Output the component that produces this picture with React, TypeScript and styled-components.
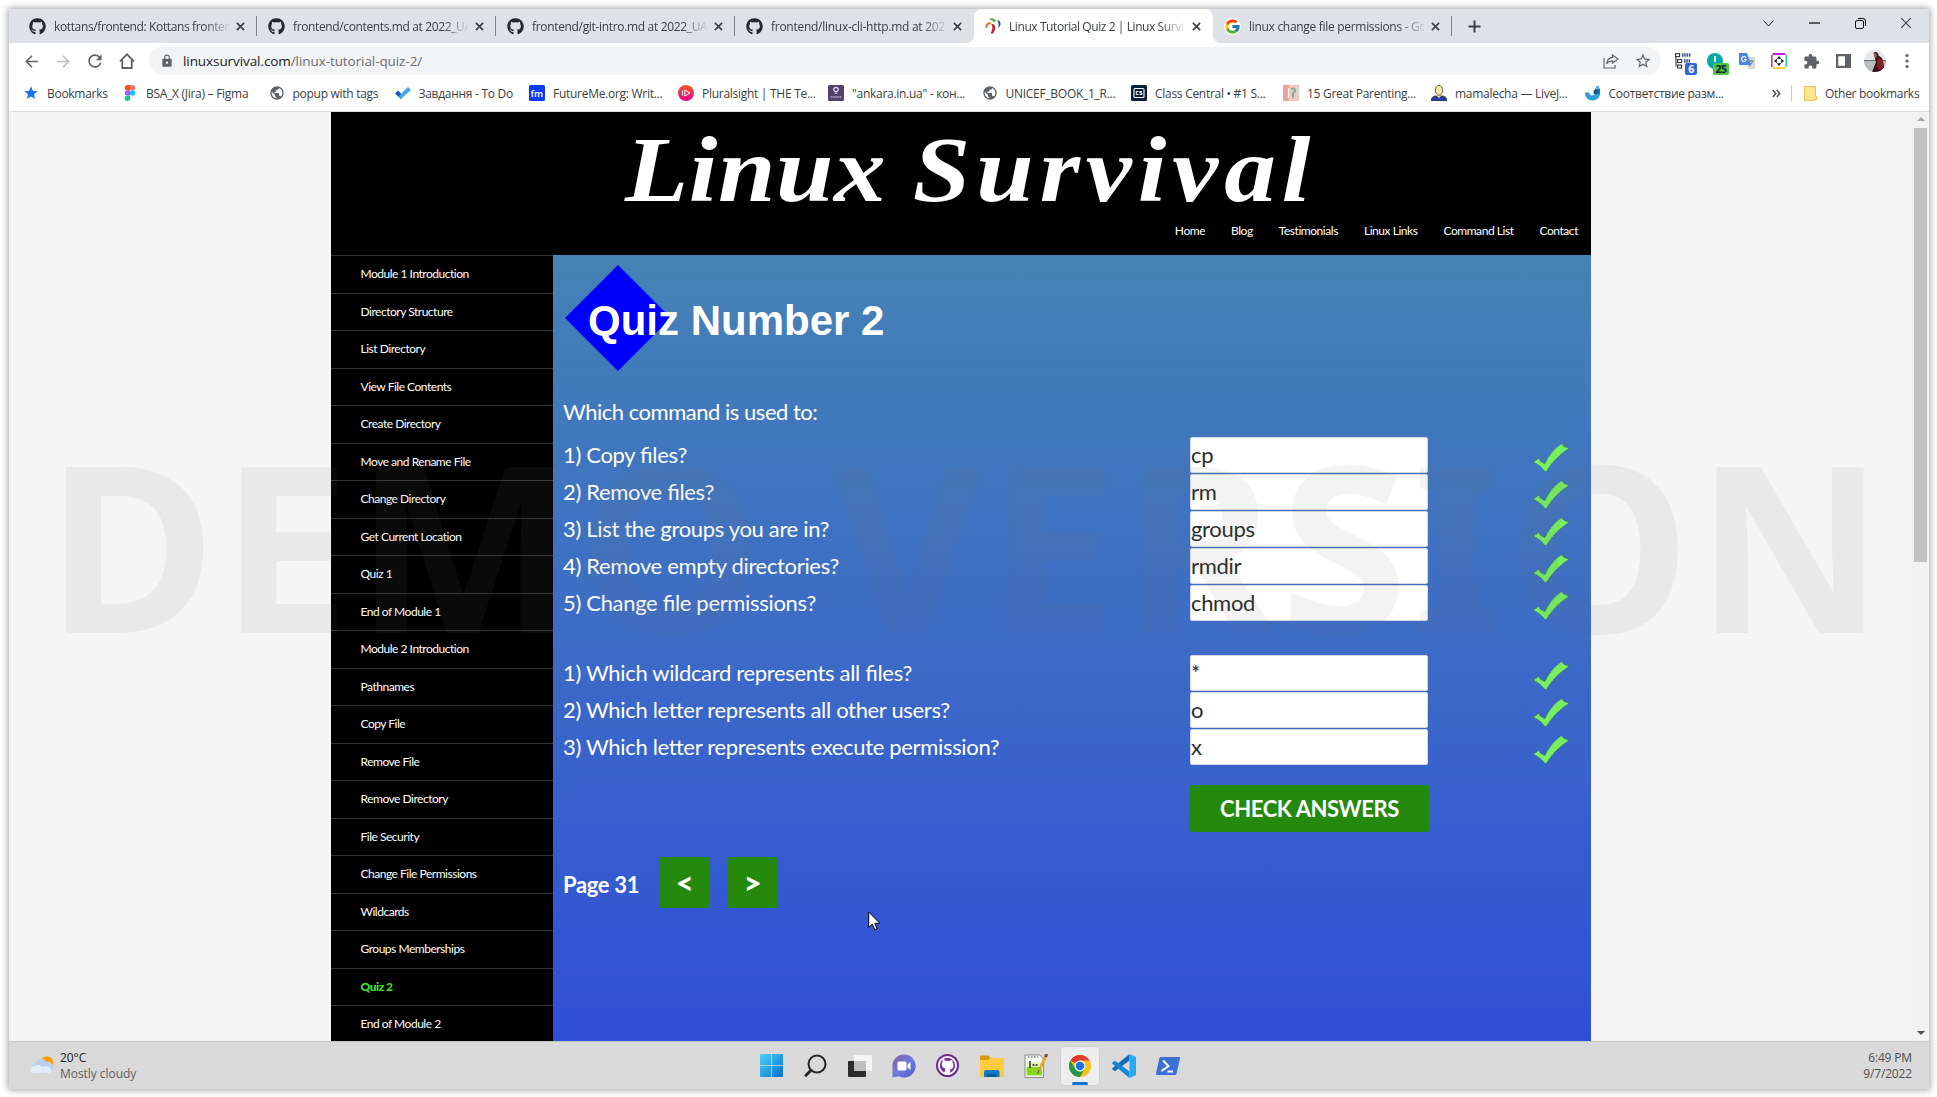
import React from "react";
import styled, { createGlobalStyle, css } from "styled-components";
import { FaGithub } from "react-icons/fa";
import { FcGoogle } from "react-icons/fc";
import { MdArrowBack, MdArrowForward, MdRefresh, MdLock, MdStar, MdStarBorder, MdExtension, MdPublic } from "react-icons/md";

const ui = `"Segoe UI", "Open Sans", "Noto Sans", sans-serif`;
const lato = `Lato, "Liberation Sans", sans-serif`;

const Global = createGlobalStyle`
  * { box-sizing: border-box; }
  html, body { margin: 0; padding: 0; background: #fff; overflow: hidden; }
  body { width: 1937px; height: 1097px; }
  svg { display: block; flex: none; }
  input, button { font: inherit; letter-spacing: inherit; }
`;

const Desktop = styled.div`
  width: 1937px;
  height: 1097px;
  padding: 9px 8px 8px 9px;
`;

const Screen = styled.div`
  position: relative;
  width: 1920px;
  height: 1080px;
  display: flex;
  flex-direction: column;
  box-shadow: 0 0 7px 1px rgba(0, 0, 0, 0.36);
  font-family: ${ui};
  background: #fff;
`;

/* ---------- browser chrome ---------- */

const TabStrip = styled.div`
  height: 34px;
  flex: none;
  display: flex;
  background: #dee1e6;
  padding-left: 9px;
`;

const Tab = styled.div<{ $active?: boolean; $line?: boolean }>`
  position: relative;
  width: 239px;
  height: 34px;
  display: flex;
  align-items: center;
  padding: 0 9px 0 10.5px;
  font-size: 12px;
  color: #3c4043;
  ${(p) =>
    p.$active &&
    css`
      background: #fff;
      border-radius: 8px 8px 0 0;
      &::before, &::after {
        content: "";
        position: absolute;
        bottom: 0;
        width: 8px;
        height: 8px;
      }
      &::before { left: -8px; background: radial-gradient(circle at 0 0, transparent 8px, #fff 8.5px); }
      &::after { right: -8px; background: radial-gradient(circle at 100% 0, transparent 8px, #fff 8.5px); }
    `}
  ${(p) =>
    p.$line &&
    css`
      &::after {
        content: "";
        position: absolute;
        right: 0;
        top: 7px;
        width: 1px;
        height: 20px;
        background: #808388;
      }
    `}
`;

const TabTitle = styled.span<{ $ls: number }>`
  width: 175px;
  margin-left: 8.5px;
  white-space: nowrap;
  overflow: hidden;
  letter-spacing: ${(p) => p.$ls}px;
  mask-image: linear-gradient(90deg, #000 150px, transparent 178px);
`;

const TabClose = styled.span`
  margin-left: auto;
  width: 16px;
  display: flex;
  justify-content: center;
`;

const NewTab = styled.div`
  width: 44px;
  display: flex;
  align-items: center;
  justify-content: center;
`;

const Caption = styled.div`
  margin-left: auto;
  display: flex;
  height: 28px;
  align-items: center;
`;

const CaptionButton = styled.div`
  width: 46px;
  display: flex;
  justify-content: center;
`;

const Toolbar = styled.div`
  height: 36px;
  flex: none;
  display: flex;
  align-items: center;
  padding-left: 6px;
  padding-right: 6px;
  background: #fff;
`;

const ToolButton = styled.div<{ $dim?: boolean }>`
  width: 32px;
  display: flex;
  justify-content: center;
  color: ${(p) => (p.$dim ? "#babcbe" : "#5f6368")};
`;

const Omnibox = styled.div`
  width: 1512px;
  height: 28px;
  margin-left: 6px;
  border-radius: 14px;
  background: #f1f3f4;
  display: flex;
  align-items: center;
  padding: 0 2px 0 11px;
  color: #5f6368;
`;

const Url = styled.div`
  margin-left: 9px;
  font-size: 13.5px;
  letter-spacing: -0.08px;
  color: #6b6f74;
  flex: 1;
  b { font-weight: 400; color: #202124; }
`;

const Extensions = styled.div`
  margin-left: auto;
  display: flex;
  align-items: center;
`;

const Ext = styled.div`
  position: relative;
  width: 32px;
  height: 26px;
  display: flex;
  align-items: center;
  justify-content: center;
  color: #5f6368;
`;

const Badge = styled.span<{ $bg: string; $w: number; $fg: string }>`
  position: absolute;
  right: 2px;
  bottom: -1px;
  width: ${(p) => p.$w}px;
  height: 12px;
  border-radius: 2px;
  background: ${(p) => p.$bg};
  color: ${(p) => p.$fg};
  font-size: 10.5px;
  font-weight: 700;
  letter-spacing: -0.4px;
  line-height: 12px;
  text-align: center;
`;

const Bookmarks = styled.div`
  height: 33px;
  flex: none;
  display: flex;
  align-items: center;
  padding: 0 10px 5px 14px;
  background: #fff;
  border-bottom: 1px solid #dadce0;
`;

const Bookmark = styled.div<{ $w: number }>`
  width: ${(p) => p.$w}px;
  height: 20px;
  margin-top: 1px;
  display: flex;
  align-items: center;
  gap: 8px;
  font-size: 12px;
  letter-spacing: -0.28px;
  color: #3c4043;
  white-space: nowrap;
`;

const More = styled(Bookmark)`
  margin-left: auto;
`;

const Divider = styled.div`
  width: 1px;
  height: 16px;
  margin: 1px 12px 0 10px;
  background: #c8cacd;
`;

/* ---------- web page ---------- */

const Viewport = styled.div`
  height: 929px;
  flex: none;
  display: flex;
  background: #f5f5f5;
  overflow: hidden;
`;

const Site = styled.div`
  width: 1260px;
  margin-left: 322px;
  display: flex;
  flex-direction: column;
  font-family: ${lato};
`;

const Masthead = styled.header`
  height: 143px;
  flex: none;
  background: #000;
  color: #fff;
  display: flex;
  flex-direction: column;
`;

const SiteTitle = styled.h1`
  margin: 0 0 0 294px;
  width: 800px;
  height: 104px;
  font: italic 700 94px/115px "Lucida Calligraphy", "Apple Chancery", "Liberation Serif", serif;
  white-space: nowrap;
  transform: scaleX(1.1);
  transform-origin: 0 0;
`;

const TitleWord = styled.span<{ $ls: number }>`
  letter-spacing: ${(p) => p.$ls}px;
`;

const TopNav = styled.nav`
  display: flex;
  justify-content: flex-end;
  gap: 26px;
  padding-right: 13px;
  height: 30px;
  font-size: 12px;
  line-height: 30px;
  letter-spacing: -0.45px;
`;

const Columns = styled.div`
  flex: 1;
  min-height: 0;
  display: flex;
`;

const Sidebar = styled.nav`
  width: 222px;
  background: #000;
  overflow: hidden;
`;

const SideItem = styled.div<{ $current?: boolean }>`
  height: 37.5px;
  border-top: 1px solid #333;
  padding: 8px 29.5px 9px;
  font-size: 12px;
  line-height: 20px;
  letter-spacing: -0.48px;
  color: ${(p) => (p.$current ? "#41e02d" : "#fff")};
  font-weight: ${(p) => (p.$current ? 900 : 400)};
`;

const Main = styled.main`
  width: 1038px;
  padding: 10px 0 0 10px;
  background: linear-gradient(#4682b4 0%, #427abb 16%, #3d6cc5 48%, #2f4fd8 100%);
  color: #fff;
  font-size: 22px;
  letter-spacing: -0.33px;
  font-feature-settings: "liga" 1;
`;

const Banner = styled.div`
  position: relative;
  height: 106px;
  margin-left: 1px;
`;

const BannerText = styled.h2`
  position: absolute;
  left: 24px;
  top: 32px;
  margin: 0;
  font: 700 42px/48px "Liberation Sans", Arial, sans-serif;
  letter-spacing: 0;
  white-space: nowrap;
`;

const Prompt = styled.p`
  margin: 26px 0 10px;
  height: 30px;
  line-height: 30px;
  letter-spacing: -0.48px;
`;

const Group = styled.div`
  margin-bottom: 33px;
`;

const Question = styled.label`
  height: 37px;
  display: grid;
  grid-template-columns: 627px 343px 36px;
  align-items: center;
  span { padding-bottom: 2px; }
  svg { margin-top: 4px; }
`;

const Answer = styled.input`
  width: 238px;
  height: 36px;
  margin: 0 0 1px;
  padding: 0 0 2px;
  border: 1px solid #d5d8e0;
  border-radius: 2px;
  background: #fff;
  color: #2b2b2b;
  outline: none;
`;

const CheckButton = styled.button`
  display: block;
  width: 239px;
  height: 47px;
  margin: -14px 0 25px 627px;
  padding: 0;
  border: 0;
  border-radius: 2px;
  background: #24890d;
  color: #fff;
  font-weight: 700;
  font-size: 22px;
  letter-spacing: -0.42px;
`;

const Pager = styled.div`
  display: flex;
  align-items: center;
  font-weight: 700;
`;

const PagerLabel = styled.span`
  width: 96px;
  padding-top: 3px;
`;

const PagerButton = styled.button`
  width: 51px;
  height: 51px;
  margin-right: 17px;
  padding: 0 0 2px;
  border: 0;
  border-radius: 2px;
  background: #24890d;
  color: #fff;
  font-weight: 900;
  font-size: 31px;
`;

const Scrollbar = styled.div`
  width: 17px;
  margin-left: auto;
  background: #f1f1f1;
  display: flex;
  flex-direction: column;
  align-items: center;
  padding: 5px 0 6px;
`;

const Thumb = styled.div`
  width: 13px;
  height: 434px;
  margin-top: 7px;
  margin-bottom: auto;
  background: #c1c1c1;
`;

const Arrow = styled.i<{ $down?: boolean }>`
  border: 4px solid transparent;
  ${(p) => (p.$down ? "border-top-color: #505050; border-bottom: 0;" : "border-bottom-color: #a3a3a3; border-top: 0;")}
`;

/* ---------- taskbar ---------- */

const Taskbar = styled.footer`
  height: 48px;
  flex: none;
  display: grid;
  grid-template-columns: 1fr auto 1fr;
  align-items: center;
  background: #d9d9d9;
  border-top: 1px solid #c4c4c4;
  font-size: 12px;
  line-height: 16px;
`;

const Weather = styled.div`
  display: flex;
  align-items: center;
  gap: 6px;
  padding-left: 21px;
  padding-top: 1px;
  letter-spacing: -0.05px;
  color: #1c1c1c;
  svg { margin-bottom: 3px; }
  small { display: block; font-size: 12px; color: #606060; }
`;

const Apps = styled.div`
  display: flex;
  align-items: center;
  margin-left: 2px;
`;

const TaskButton = styled.div<{ $active?: boolean }>`
  position: relative;
  width: 38px;
  height: 38px;
  margin: 0 3.05px;
  border-radius: 4px;
  display: flex;
  align-items: center;
  justify-content: center;
  ${(p) =>
    p.$active &&
    css`
      background: #ededed;
      box-shadow: 0 0 0 1px #cfcfcf;
      &::after {
        content: "";
        position: absolute;
        bottom: 0;
        left: 11px;
        width: 16px;
        height: 3px;
        border-radius: 2px;
        background: #0a78d4;
      }
    `}
`;

const Clock = styled.div`
  text-align: right;
  padding-right: 17px;
  color: #505050;
  letter-spacing: -0.15px;
`;

/* ---------- overlays ---------- */

const Watermark = styled.div`
  position: absolute;
  left: 37px;
  top: 376px;
  font: 700 232px/316px "Noto Sans", "Open Sans", sans-serif;
  letter-spacing: 4.8px;
  white-space: nowrap;
  color: rgba(118, 118, 118, 0.086);
  pointer-events: none;
`;

const Cursor = styled.svg`
  position: absolute;
  left: 859px;
  top: 902px;
`;

/* ---------- drawings ---------- */

const Close = ({ s = 9, w = 1.8 }: { s?: number; w?: number }) => (
  <svg width={s} height={s} viewBox="0 0 10 10" stroke="#3c4043" strokeWidth={w}>
    <path d="M1 1 9 9M9 1 1 9" />
  </svg>
);

const SurvivalIcon = () => (
  <svg width="16" height="16" viewBox="0 0 16 16">
    <path d="M.5 10C-.3 5.500 3 3.500 6.500 4.500L5.500 6.300C3.500 6 2.300 7.500 2.500 10Z" fill="#e8762c" />
    <path d="M4 1.800C6-.5 9.500 0 11 2.800L9 4.500C8 3 6.500 2 4 1.800Z" fill="#6aa84f" />
    <path d="M12 2C16 3 17 7 13 10C14 7 14 5 12 2Z" fill="#1f3f8f" />
    <path d="M6 6C11 5 11.500 11 8 15.500L5.500 15.500C8 11 8 8 6 6Z" fill="#c81e2b" />
  </svg>
);

const FigmaIcon = () => (
  <svg width="16" height="16" viewBox="0 0 16 16">
    <path d="M5.500 0H8v5.300H5.500a2.650 2.650 0 0 1 0-5.300Z" fill="#f24e1e" />
    <path d="M8 0h2.500a2.650 2.650 0 0 1 0 5.300H8Z" fill="#ff7262" />
    <path d="M5.500 5.300H8v5.300H5.500a2.650 2.650 0 0 1 0-5.300Z" fill="#a259ff" />
    <circle cx="10.600" cy="8" r="2.650" fill="#1abcfe" />
    <path d="M5.500 10.600H8v2.700a2.650 2.650 0 1 1-2.500-2.700Z" fill="#0acf83" />
  </svg>
);

const TodoIcon = () => (
  <svg width="16" height="16" viewBox="0 0 16 16">
    <path d="M0 8.500 3 5.500 8.500 11 5.800 14Z" fill="#185abd" />
    <path d="M5.800 14 3.500 11.500 13 2 16 5Z" fill="#41a5ee" />
  </svg>
);

const TileIcon = ({ bg, children }: { bg: string; children?: React.ReactNode }) => (
  <svg width="16" height="16" viewBox="0 0 16 16">
    <rect width="16" height="16" rx="1.500" fill={bg} />
    {children}
  </svg>
);

const FmIcon = () => (
  <TileIcon bg="#0a3cff">
    <text x="7.800" y="11.500" textAnchor="middle" fontSize="9.500" fontWeight="600" letterSpacing="0" fontFamily="Open Sans" fill="#fff">fm</text>
  </TileIcon>
);

const PluralIcon = () => (
  <svg width="16" height="16" viewBox="0 0 16 16">
    <defs>
      <linearGradient id="ps" x1="0" y1="0" x2="0" y2="1">
        <stop offset="0" stopColor="#f15b2a" />
        <stop offset="1" stopColor="#ec008c" />
      </linearGradient>
    </defs>
    <circle cx="8" cy="8" r="8" fill="url(#ps)" />
    <path d="M6.800 5 12 8 6.800 11ZM4.500 5.500v5" fill="none" stroke="#fff" strokeWidth="1" />
  </svg>
);

const AnkaraIcon = () => (
  <TileIcon bg="#51426b">
    <circle cx="8" cy="4.500" r="2.200" fill="none" stroke="#e8e2f0" strokeWidth="1.200" />
    <path d="M6.800 8.300h2.400" stroke="#d8d0e4" strokeWidth="1.200" />
    <path d="M2.500 12h11" stroke="#b9aecb" strokeWidth="1.600" strokeDasharray="1.400 .5" />
  </TileIcon>
);

const ClassIcon = () => (
  <TileIcon bg="#0b1f3b">
    <rect x="3" y="3.500" width="10" height="9" rx="1" fill="none" stroke="#fff" strokeWidth="1.100" />
    <path d="M7.500 6.500H5.300v3h2.200M11 6.500H8.800V8H11v1.500H8.800" fill="none" stroke="#fff" strokeWidth="1" />
  </TileIcon>
);

const ParentIcon = () => (
  <svg width="16" height="16" viewBox="0 0 16 16">
    <rect width="16" height="16" fill="#efc9bd" />
    <rect width="6" height="16" fill="#f2a09a" />
    <path d="M8 4c3-1.500 5 .5 4 2.500l-2 1.500v5" fill="none" stroke="#7fa596" strokeWidth="1.700" />
    <path d="M5.500 3v10" stroke="#fff" strokeWidth="1.200" />
    <path d="M14 2v12" stroke="#c9dccf" strokeWidth="1.500" />
  </svg>
);

const PersonIcon = () => (
  <svg width="16" height="16" viewBox="0 0 16 16">
    <path d="M0 16c0-4 3-5 5-5h6c2 0 5 1 5 5Z" fill="#2c3f94" stroke="#1c2350" strokeWidth=".7" />
    <path d="M6.300 9h3.400v2.500L8 13 6.300 11.500Z" fill="#f3d79a" />
    <ellipse cx="8" cy="5.300" rx="3.700" ry="4.900" fill="#f8e6b0" stroke="#5b4a3a" strokeWidth=".9" />
  </svg>
);

const SizeIcon = () => (
  <svg width="16" height="16" viewBox="0 0 16 16">
    <path d="M0 7.500h4c.5 3.500 4.500 4 6 1V6h5c1 6-3 9.500-7.500 9.500C3 15.500 0 12 0 7.500Z" fill="#2a9fe0" />
    <path d="M10 3.500h5V9h-5Z" fill="#1d6fb4" />
    <path d="M11 1h3v2.500h-3Z" fill="#49b7ee" />
    <circle cx="10.500" cy="7" r="2.200" fill="#1e4f86" />
  </svg>
);

const FolderSmall = () => (
  <svg width="13" height="15" viewBox="0 0 13 15">
    <path d="M.5.500h11V10h1v3.500h-2v.900h-10Z" fill="#ffe591" stroke="#e9c74e" />
  </svg>
);

const Tick = () => (
  <svg width="36" height="29" viewBox="0 0 36 29">
    <path d="M.5 19 5.800 15.500 7.500 18.500 12 20.800C16 12 22 5 28.500.800L31 3.500 36 5.200C29 10 20 17 13.500 28.300L12 28.500C9 24.500 5.500 21.500 2 20Z" fill="#78ef5f" stroke="#2c7a3e" strokeWidth=".6" strokeDasharray="1.500 1" />
  </svg>
);

const tabs = [
  { t: "kottans/frontend: Kottans frontend", ls: -0.37, i: "gh" },
  { t: "frontend/contents.md at 2022_UA", ls: -0.37, i: "gh" },
  { t: "frontend/git-intro.md at 2022_UA", ls: -0.33, i: "gh" },
  { t: "frontend/linux-cli-http.md at 2022", ls: -0.27, i: "gh" },
  { t: "Linux Tutorial Quiz 2 | Linux Survival", ls: -0.42, i: "ls" },
  { t: "linux change file permissions - Google", ls: -0.3, i: "g" },
];

const globe = <MdPublic size={16} color="#5f6368" />;

const bookmarks: { t: string; w: number; i: React.ReactNode }[] = [
  { t: "Bookmarks", w: 99, i: <MdStar size={16} color="#1a73e8" /> },
  { t: "BSA_X (Jira) – Figma", w: 146.500, i: <FigmaIcon /> },
  { t: "popup with tags", w: 126, i: globe },
  { t: "Завдання - To Do", w: 134.500, i: <TodoIcon /> },
  { t: "FutureMe.org: Writ...", w: 149, i: <FmIcon /> },
  { t: "Pluralsight | THE Te...", w: 150, i: <PluralIcon /> },
  { t: "\"ankara.in.ua\" - кон...", w: 153.500, i: <AnkaraIcon /> },
  { t: "UNICEF_BOOK_1_R...", w: 149.500, i: globe },
  { t: "Class Central • #1 S...", w: 152, i: <ClassIcon /> },
  { t: "15 Great Parenting...", w: 148, i: <ParentIcon /> },
  { t: "mamalecha — LiveJ...", w: 153.500, i: <PersonIcon /> },
  { t: "Соответствие разм...", w: 150, i: <SizeIcon /> },
];

const side = [
  "Module 1 Introduction", "Directory Structure", "List Directory", "View File Contents", "Create Directory",
  "Move and Rename File", "Change Directory", "Get Current Location", "Quiz 1", "End of Module 1",
  "Module 2 Introduction", "Pathnames", "Copy File", "Remove File", "Remove Directory", "File Security",
  "Change File Permissions", "Wildcards", "Groups Memberships", "Quiz 2", "End of Module 2",
];

const groups = [
  [["1) Copy files?", "cp"], ["2) Remove files?", "rm"], ["3) List the groups you are in?", "groups"], ["4) Remove empty directories?", "rmdir"], ["5) Change file permissions?", "chmod"]],
  [["1) Which wildcard represents all files?", "*"], ["2) Which letter represents all other users?", "o"], ["3) Which letter represents execute permission?", "x"]],
];

const WindowsIcon = () => (
  <svg width="23" height="23" viewBox="0 0 23 23">
    <defs>
      <linearGradient id="win" x1="0" y1="0" x2="1" y2="1">
        <stop offset="0" stopColor="#4fd0fb" />
        <stop offset="1" stopColor="#0571cc" />
      </linearGradient>
    </defs>
    <path d="M1 0h10.200v11.200H0V1a1 1 0 0 1 1-1ZM12 0h10a1 1 0 0 1 1 1v10.200H12ZM0 12h11.200v11H1a1 1 0 0 1-1-1ZM12 12h11v10a1 1 0 0 1-1 1H12Z" fill="url(#win)" />
  </svg>
);

const SearchIcon = () => (
  <svg width="23" height="24" viewBox="0 0 23 24" fill="none" stroke="#262626">
    <circle cx="13" cy="10" r="8.500" strokeWidth="2" />
    <path d="M7 16.300 2 21.300" strokeWidth="3" strokeLinecap="round" />
  </svg>
);

const TaskViewIcon = () => (
  <svg width="24" height="24" viewBox="0 0 24 24">
    <rect x="0" y="7" width="18" height="16" rx="1" fill="#2b2b2b" />
    <rect x="6" y="1" width="18" height="16" rx="1" fill="#f4f4f4" />
    <path d="M6 7h12v10H6Z" fill="#bdbdbd" />
  </svg>
);

const ChatIcon = () => (
  <svg width="24" height="24" viewBox="0 0 24 24">
    <defs>
      <linearGradient id="chat" x1="0" y1="0" x2="1" y2="1">
        <stop offset="0" stopColor="#8a5a9e" />
        <stop offset=".5" stopColor="#6f7be0" />
        <stop offset="1" stopColor="#5059c9" />
      </linearGradient>
    </defs>
    <path d="M12 .500a11.500 11.500 0 1 1-5 21.800L.500 23.500V12A11.500 11.500 0 0 1 12 .500Z" fill="url(#chat)" />
    <rect x="5.500" y="7.500" width="9" height="9" rx="1.500" fill="#fff" />
    <path d="M15.500 10.500 18.500 8v8l-3-2.500Z" fill="#fff" />
  </svg>
);

const GithubDesktop = () => (
  <svg width="23" height="23" viewBox="0 0 23 23">
    <circle cx="11.500" cy="11.500" r="11.500" fill="#6b2b92" />
    <circle cx="11.500" cy="11.500" r="8.600" fill="#7a33a3" />
    <path d="M9 20v-3.200c-1.800.5-2.600-.3-3.200-1.400M14 20v-4.200c0-.6-.2-1-.5-1.400 2.200-.3 3.700-1.500 3.700-4.200 0-1-.4-1.900-1-2.600.2-.7.200-1.600-.1-2.600-1.200 0-2 .6-2.700 1.100a9 9 0 0 0-4 0C8.700 4.600 7.900 4 6.700 4c-.3 1-.3 1.900-.1 2.600-.6.700-1 1.600-1 2.600 0 2.700 1.500 3.900 3.700 4.200-.3.400-.4.800-.4 1.400V20Z" transform="translate(.2 1)" fill="#fff" />
    <circle cx="11.500" cy="11.500" r="8.600" fill="none" stroke="#fff" strokeWidth="1.800" />
  </svg>
);

const ExplorerIcon = () => (
  <svg width="24" height="22" viewBox="0 0 24 22">
    <path d="M0 2a1.500 1.500 0 0 1 1.500-1.500h7L10.500 3 8.500 5H0Z" fill="#d9980c" />
    <path d="M0 5h8l2.500-2H23a1 1 0 0 1 1 1v17a1 1 0 0 1-1 1H1a1 1 0 0 1-1-1Z" fill="#fdcb3f" />
    <path d="M4 22v-5a2 2 0 0 1 2-2h11.500a2 2 0 0 1 2 2v5Z" fill="#1179c8" />
    <path d="M7 19h9.500v3H7Z" fill="#0b5a98" />
  </svg>
);

const NotepadIcon = () => (
  <svg width="24" height="24" viewBox="0 0 24 24">
    <path d="M1 1h15l3.500 4v18.500H1Z" fill="#fafafa" stroke="#8a8a8a" />
    <path d="M2.500 13h15.500v8.500H2.500Z" fill="#8ad51e" />
    <path d="M2.500 8h15.500v5H2.500Z" fill="#e2f6b8" />
    <path d="M6 7v7M8.500 11h2M11.500 11h2" stroke="#222" strokeWidth="1.400" />
    <path d="M4 3h10" stroke="#777" strokeDasharray="1.500 1.500" strokeWidth="1.500" />
    <path d="M22 1.500 14.500 18" stroke="#e7a526" strokeWidth="2.800" />
    <path d="M22.800 0 21.500 3" stroke="#7c4f50" strokeWidth="3" />
    <path d="M15 16 13.500 20" stroke="#555" strokeWidth="1" />
  </svg>
);

const ChromeIcon = () => (
  <svg width="22" height="22" viewBox="0 0 22 22">
    <circle cx="11" cy="11" r="11" fill="#fbc116" />
    <path d="M11 0A11 11 0 0 1 20.530 5.500H11A5.500 5.500 0 0 0 6.240 8.250L1.470 5.500A11 11 0 0 1 11 0Z" fill="#e33b2e" />
    <path d="M1.470 5.500 6.240 13.750A5.500 5.500 0 0 0 15.760 13.750L11 22A11 11 0 0 1 1.470 5.500Z" fill="#229a49" />
    <circle cx="11" cy="11" r="5.400" fill="#fff" />
    <circle cx="11" cy="11" r="4.300" fill="#1b72e8" />
  </svg>
);

const CodeIcon = () => (
  <svg width="24" height="24" viewBox="0 0 24 24">
    <path d="M17.500 0v6.500L3 17.300.300 15.500V14.300Z" fill="#0a6fb8" />
    <path d="M17.500 24v-6.500L3 6.700.300 8.500V9.700Z" fill="#1388d2" />
    <path d="M17.500 0 24 3v18l-6.500 3Z" fill="#29a8f0" />
  </svg>
);

const ShellIcon = () => (
  <svg width="24" height="18" viewBox="0 0 24 18">
    <path d="M4.500 0H23a1 1 0 0 1 1 1.200L20.500 17a1.300 1.300 0 0 1-1.200 1H1a1 1 0 0 1-1-1.200L3.400 1A1.300 1.300 0 0 1 4.500 0Z" fill="#3d70d4" />
    <path d="m7 3.500 5.500 5.500-7 5M11.500 14.500H17" fill="none" stroke="#fff" strokeWidth="2" />
  </svg>
);

const WeatherIcon = () => (
  <svg width="24" height="18" viewBox="0 0 24 18">
    <circle cx="17" cy="6.500" r="6.300" fill="#fb9d0d" />
    <path d="M6 16.500a4.700 4.700 0 0 1-.5-9.300A6 6 0 0 1 16.500 6a5 5 0 0 1 2.500 10.500Z" fill="#bccfee" />
    <path d="M4 17a3.500 3.500 0 0 1 .5-7 6 6 0 0 1 8 1c4-2 8 0 9 3 0 2-1 3-2.500 3Z" fill="#e1ebfa" />
  </svg>
);

export default function App() {
  return (
    <>
      <Global />
      <Desktop>
        <Screen>
          <TabStrip>
            {tabs.map((tab, n) => (
              <Tab key={tab.t} $active={n === 4} $line={n < 3 || n === 5}>
                {tab.i === "gh" && <FaGithub size={17} color="#24292f" />}
                {tab.i === "ls" && <SurvivalIcon />}
                {tab.i === "g" && <FcGoogle size={17} style={{ background: "#fff", borderRadius: 9 }} />}
                <TabTitle $ls={tab.ls}>{tab.t}</TabTitle>
                <TabClose><Close /></TabClose>
              </Tab>
            ))}
            <NewTab>
              <svg width="13" height="13" viewBox="0 0 13 13" stroke="#3c4043" strokeWidth="2"><path d="M6.500 .500v12M.500 6.500h12" /></svg>
            </NewTab>
            <Caption>
              <CaptionButton><svg width="11" height="7" viewBox="0 0 11 7" fill="none" stroke="#222"><path d="M.5.500 5.500 6 10.500.500" /></svg></CaptionButton>
              <CaptionButton><svg width="11" height="2"><path d="M0 1h11" stroke="#111" strokeWidth="1.300" /></svg></CaptionButton>
              <CaptionButton><svg width="11" height="11" viewBox="0 0 11 11" fill="none" stroke="#111"><rect x=".5" y="2.500" width="8" height="8" rx="1.500" /><path d="M3 .500h5A2.500 2.500 0 0 1 10.500 3v5" /></svg></CaptionButton>
              <CaptionButton><Close s={12} w={0.9} /></CaptionButton>
            </Caption>
          </TabStrip>

          <Toolbar>
            <ToolButton><MdArrowBack size={19} /></ToolButton>
            <ToolButton $dim><MdArrowForward size={19} /></ToolButton>
            <ToolButton><MdRefresh size={20} /></ToolButton>
            <ToolButton><svg width="16" height="16" viewBox="0 0 16 16" fill="none" stroke="#5f6368" strokeWidth="1.800"><path d="M1 8.300 8 1.300l7 7M3.300 7v8h9.400V7" /></svg></ToolButton>
            <Omnibox>
              <MdLock size={14} />
              <Url><b>linuxsurvival.com</b>/linux-tutorial-quiz-2/</Url>
              <ToolButton><svg width="16" height="16" viewBox="0 0 16 16" fill="none" stroke="#5f6368" strokeWidth="1.200"><path d="M1 5v10h11v-3M9.500 2l5.500 4-5.500 4V7.800C7 7.800 5 8.600 3.800 11 4 7 6.500 4.500 9.500 4.300Z" /></svg></ToolButton>
              <ToolButton><MdStarBorder size={18} /></ToolButton>
            </Omnibox>
            <Extensions>
              <Ext>
                <svg width="16" height="16" viewBox="0 0 16 16" fill="none" stroke="#333" strokeWidth="1.100"><rect x=".6" y=".6" width="4" height="3" /><rect x="2.600" y="6.500" width="4" height="3" /><rect x="2.600" y="12" width="4" height="3" /><path d="M1 4v9.500" /><path d="M7 2h9M9 8h6" stroke="#3a4f8e" strokeWidth="3.500" strokeDasharray="1.500 .8" /></svg>
                <Badge $bg="#3266d3" $fg="#fff" $w={12}>6</Badge>
              </Ext>
              <Ext>
                <svg width="16" height="16" viewBox="0 0 16 16"><circle cx="8" cy="8" r="8" fill="#00a8a8" /><path d="M8 3v6" stroke="#e6ffff" strokeWidth="2" /></svg>
                <Badge $bg="#4fc143" $fg="#123" $w={16}>25</Badge>
              </Ext>
              <Ext>
                <svg width="16" height="16" viewBox="0 0 16 16"><path d="M6 4h10v12H9Z" fill="#d4d6da" /><path d="M0 0h8l4 12H1a1 1 0 0 1-1-1Z" fill="#4787ed" /><path d="M7 4.800A2.400 2.400 0 1 0 7.300 6.500H5" fill="none" stroke="#fff" strokeWidth="1.100" /><path d="M9.500 8h5M12 7v1M10.500 13l3.500-5" stroke="#607d8b" fill="none" /></svg>
              </Ext>
              <Ext>
                <svg width="16" height="16" viewBox="0 0 16 16"><path d="M1.500 1h13" stroke="#c31be8" strokeWidth="2" /><path d="M1.500 15.200h13" stroke="#fcc52b" strokeWidth="1.800" /><path d="M.8 2v12" stroke="#f5265d" strokeWidth="1.600" /><path d="M15.200 2v12" stroke="#25d991" strokeWidth="1.600" /><path d="M8 3 5.800 5.800h4.400ZM8 13l-2.200-2.800h4.400ZM3 8l2.800-2.200v4.400ZM13 8l-2.800-2.200v4.400Z" fill="#111" /></svg>
              </Ext>
              <Ext><MdExtension size={17} /></Ext>
              <Ext><svg width="15" height="14" viewBox="0 0 15 14"><path d="M0 0h15v14H0ZM2.200 2.200v9.600H9V2.200Z" fill="#5f6368" fillRule="evenodd" /></svg></Ext>
              <Ext>
                <svg width="22" height="22" viewBox="0 0 22 22"><defs><clipPath id="av"><circle cx="11" cy="11" r="11" /></clipPath></defs><g clipPath="url(#av)"><rect width="22" height="22" fill="#e4e8ea" /><path d="M0 10h22v1.500H0Z" fill="#6c7674" /><path d="M0 11.500h22V22H0Z" fill="#b9bfc0" /><path d="M9.500 3c2-2 5-1 5 2.500L18 8l3 14H8l4-10Z" fill="#3a1216" /><path d="M13.500 8l5.500 2 1 7-4 3-3-3Z" fill="#84202a" /><path d="M10 3.500h2.500v4H10.500Z" fill="#a9705c" /></g></svg>
              </Ext>
              <Ext><svg width="4" height="16" viewBox="0 0 4 16" fill="#5f6368"><circle cx="2" cy="2.500" r="1.600" /><circle cx="2" cy="8" r="1.600" /><circle cx="2" cy="13.500" r="1.600" /></svg></Ext>
            </Extensions>
          </Toolbar>

          <Bookmarks>
            {bookmarks.map((b) => (
              <Bookmark key={b.t} $w={b.w}>{b.i}{b.t}</Bookmark>
            ))}
            <More $w={9}>
              <svg width="9" height="9" viewBox="0 0 9 9" fill="none" stroke="#4a4d51" strokeWidth="1.500"><path d="m.8 1 3 3.500-3 3.500M4.800 1l3 3.500-3 3.500" /></svg>
            </More>
            <Divider />
            <Bookmark $w={115}><FolderSmall />Other bookmarks</Bookmark>
          </Bookmarks>

          <Viewport>
            <Site>
              <Masthead>
                <SiteTitle><TitleWord $ls={0.5}>Linux </TitleWord><TitleWord $ls={5.4}>Survival</TitleWord></SiteTitle>
                <TopNav>
                  {["Home", "Blog", "Testimonials", "Linux Links", "Command List", "Contact"].map((l) => <span key={l}>{l}</span>)}
                </TopNav>
              </Masthead>
              <Columns>
                <Sidebar>
                  {side.map((s) => <SideItem key={s} $current={s === "Quiz 2"}>{s}</SideItem>)}
                </Sidebar>
                <Main>
                  <Banner>
                    <svg width="108" height="106" viewBox="0 0 108 106"><path d="M54 0 107 53 54 106 1 53Z" fill="#00f" /></svg>
                    <BannerText>Quiz Number 2</BannerText>
                  </Banner>
                  <Prompt>Which command is used to:</Prompt>
                  {groups.map((g, n) => (
                    <Group key={n}>
                      {g.map(([q, a]) => (
                        <Question key={q}>
                          <span>{q}</span>
                          <Answer defaultValue={a} />
                          <Tick />
                        </Question>
                      ))}
                    </Group>
                  ))}
                  <CheckButton>CHECK ANSWERS</CheckButton>
                  <Pager>
                    <PagerLabel>Page 31</PagerLabel>
                    <PagerButton>&lt;</PagerButton>
                    <PagerButton>&gt;</PagerButton>
                  </Pager>
                </Main>
              </Columns>
            </Site>
            <Scrollbar>
              <Arrow />
              <Thumb />
              <Arrow $down />
            </Scrollbar>
          </Viewport>

          <Taskbar>
            <Weather>
              <WeatherIcon />
              <div>20°C<small>Mostly cloudy</small></div>
            </Weather>
            <Apps>
              <TaskButton><WindowsIcon /></TaskButton>
              <TaskButton><SearchIcon /></TaskButton>
              <TaskButton><TaskViewIcon /></TaskButton>
              <TaskButton><ChatIcon /></TaskButton>
              <TaskButton><GithubDesktop /></TaskButton>
              <TaskButton><ExplorerIcon /></TaskButton>
              <TaskButton><NotepadIcon /></TaskButton>
              <TaskButton $active><ChromeIcon /></TaskButton>
              <TaskButton><CodeIcon /></TaskButton>
              <TaskButton><ShellIcon /></TaskButton>
            </Apps>
            <Clock>6:49 PM<br />9/7/2022</Clock>
          </Taskbar>

          <Watermark>DEMO VERSION</Watermark>
          <Cursor width="13" height="20" viewBox="0 0 13 20"><path d="M.7 1v15.500L4.300 13l2.500 6 2.500-1-2.500-5.700h5Z" fill="#fff" stroke="#000" /></Cursor>
        </Screen>
      </Desktop>
    </>
  );
}
